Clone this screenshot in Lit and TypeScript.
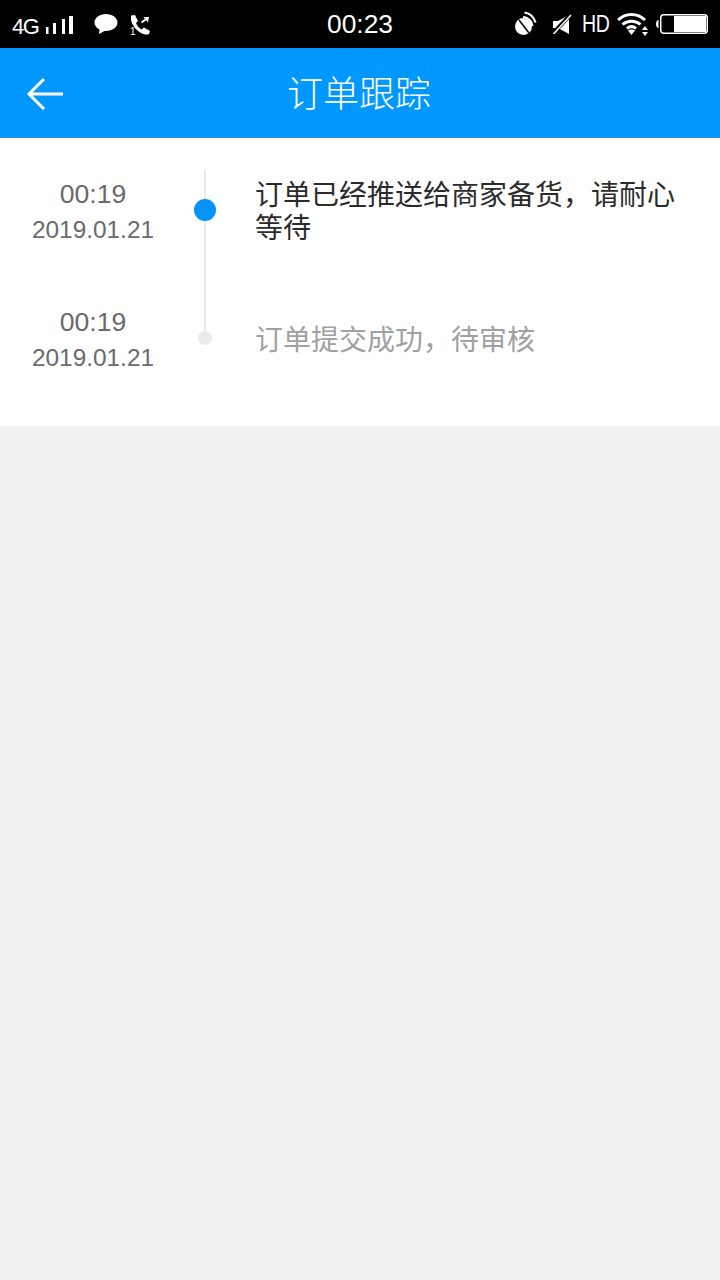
import { LitElement, html, css } from "lit";
import { customElement } from "lit/decorators.js";

const items = [
  { time: "00:19", date: "2019.01.21", text: "订单已经推送给商家备货，请耐心等待", current: true },
  { time: "00:19", date: "2019.01.21", text: "订单提交成功，待审核", current: false },
];

@customElement("app-root")
export class AppRoot extends LitElement {
  static styles = css`
    :host {
      display: flex;
      flex-direction: column;
      width: 720px;
      height: 1280px;
      background: #f1f1f1;
      font-family: "Liberation Sans", "Noto Sans CJK SC", sans-serif;
      overflow: hidden;
    }
    .status {
      height: 48px;
      background: #000;
      color: #fff;
      display: grid;
      grid-template-columns: 1fr auto 1fr;
      align-items: center;
    }
    .status-left, .status-right { display: flex; align-items: center; height: 48px; }
    .status-right { justify-content: flex-end; padding-right: 12px; }
    .net {
      font-size: 22px;
      margin-left: 12px;
      letter-spacing: -1.5px;
      line-height: 22px;
      padding-top: 5px;
    }
    .clock { font-size: 26.4px; line-height: 48px; height: 48px; box-sizing: border-box; }
    .hd {
      font-size: 23px;
      line-height: 22px;
      width: 28px;
      margin: 0 7px 0 10px;
      display: inline-block;
      transform: scaleX(0.85);
      transform-origin: left;
      letter-spacing: -0.5px;
      white-space: nowrap;
    }
    .ic { display: block; flex: none; }
    .bars { margin-left: 8px; margin-top: 4px; }
    .bubble { margin-left: 20px; }
    .phone { margin-left: 12px; }
    .mute { margin-left: 15px; }
    .batt { margin-left: 7px; }
    .header {
      height: 88px;
      background: #0098ff;
      border-bottom: 2px solid #1a92e4;
      display: grid;
      grid-template-columns: 1fr auto 1fr;
      align-items: center;
      color: #fff;
    }
    .back { display: block; margin-left: 26px; margin-top: 4px; }
    .title { font-size: 36px; line-height: 1; font-weight: 300; margin-top: 6px; margin-right: 2px; }
    .list { background: #fff; padding-top: 32px; }
    .row { display: flex; height: 128px; }
    .when {
      width: 186px;
      flex: none;
      text-align: center;
      color: #6a6a6a;
      padding-top: 6px;
    }
    .t { font-size: 26.6px; line-height: 37px; }
    .d { font-size: 24.4px; line-height: 34px; }
    .axis { width: 38px; flex: none; position: relative; }
    .line { position: absolute; left: 18px; width: 2px; background: #e9e9e9; top: 0; bottom: 0; }
    .row:last-child .line { bottom: 88px; }
    .dot { position: absolute; border-radius: 50%; }
    .dot.on { left: 8px; top: 29px; width: 22px; height: 22px; background: #0594f6; }
    .dot.off { left: 12px; top: 33px; width: 14px; height: 14px; background: #ebebeb; }
    .body { margin-left: 31px; width: 436px; font-size: 28px; line-height: 33px; padding-top: 9px; color: #2b2b2b; }
    .row.past .body { color: #a0a0a0; padding-top: 26px; }
    .sub { font-size: 10px; fill: #fff; }
  `;

  render() {
    return html`
      <div class="status">
        <div class="status-left">
          <span class="net">4G</span>
          <svg class="ic bars" width="28" height="20" viewBox="0 0 28 20" fill="#fff">
            <rect x="0" y="11" width="2.500" height="7"/><rect x="7" y="7" width="3" height="11"/><rect x="16" y="3" width="3" height="15"/><rect x="23" y="0" width="4" height="18"/>
          </svg>
          <svg class="ic bubble" width="24" height="22" viewBox="0 0 24 22" fill="#fff">
            <path d="M12 1C5.500 1 .5 4.800.5 9.500c0 3 2 5.500 5 7L5 21l5.500-3.100c.5.1 1 .1 1.500.1 6.500 0 11.500-3.800 11.500-8.500S18.500 1 12 1z"/>
          </svg>
          <svg class="ic phone" width="22" height="24" viewBox="0 0 22 24" fill="#fff">
            <path d="M1 3.500L5 3l3 6-2 2c1 3 3 5 5.500 6.500l2.500-2 6 3.500-1 3c-2 1-5 .5-8-1C6 18 2 13 1 8z"/>
            <path d="M11.500 10.500L17 6.500" fill="none" stroke="#fff" stroke-width="2"/>
            <path d="M13.500 5H19l-1 5.500z"/>
            <text class="sub" x="0" y="23">1</text>
          </svg>
        </div>
        <div class="clock">00:23</div>
        <div class="status-right">
          <svg class="ic ring" width="22" height="26" viewBox="0 0 22 26" fill="#fff">
            <circle cx="8.500" cy="15.500" r="8.500"/>
            <path d="M8 6a10 10 0 0 1 9.500 9M9.500 1.500a14 14 0 0 1 11 10" fill="none" stroke="#fff" stroke-width="2.200"/>
            <path d="M4 9l10 13" stroke="#000" stroke-width="1.500"/>
          </svg>
          <svg class="ic mute" width="20" height="20" viewBox="0 0 20 20" fill="#fff">
            <path d="M1 7h5L17 1v19L6 14H1z"/>
            <path d="M0 20.500L20 -1" stroke="#000" stroke-width="4"/>
            <path d="M1.500 20L19 1" stroke="#fff" stroke-width="1.500"/>
          </svg>
          <span class="hd">HD</span>
          <svg class="ic wifi" width="32" height="24" viewBox="0 0 32 24" fill="none" stroke="#fff" stroke-width="3">
            <path d="M1 8C8.500 .5 20.500 .5 28 8M5.500 12.500c5-4.500 13-4.500 18 0M10 16.500c3-2.500 6-2.500 9 0"/>
            <path d="M11 18.500L14.500 23l3.500-4.500c-2-1.500-5-1.500-7 0z" fill="#fff" stroke="none"/>
            <path d="M28 14l-3 4h6zM28 24l-3-4h6z" fill="#fff" stroke="none"/>
          </svg>
          <svg class="ic batt" width="52" height="22" viewBox="0 0 52 22">
            <path d="M2.500 7v8C1 15 0 13 0 11s1-4 2.500-4z" fill="#fff"/>
            <rect x="4.750" y="1.750" width="46.500" height="18.500" rx="3" fill="none" stroke="#fff" stroke-width="1.500"/>
            <rect x="18" y="3" width="32" height="16" fill="#fff"/>
          </svg>
        </div>
      </div>
      <div class="header">
        <svg class="back" width="38" height="34" viewBox="0 0 38 34" fill="none" stroke="#fff" stroke-width="3">
          <path d="M37 17H3M18 2L3 17l15 15"/>
        </svg>
        <div class="title">订单跟踪</div>
        <div></div>
      </div>
      <div class="list">
        ${items.map(
          (it) => html`
            <div class="row ${it.current ? "" : "past"}">
              <div class="when">
                <div class="t">${it.time}</div>
                <div class="d">${it.date}</div>
              </div>
              <div class="axis">
                <div class="line"></div>
                <div class="dot ${it.current ? "on" : "off"}"></div>
              </div>
              <div class="body">${it.text}</div>
            </div>
          `
        )}
      </div>
    `;
  }
}
